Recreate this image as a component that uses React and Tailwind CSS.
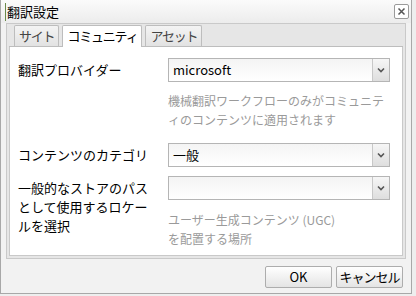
import React from 'react'

const jp = { fontFamily: '"Noto Sans CJK JP", "Noto Sans", sans-serif' }

const Select = ({ value }) => (
  <div className="flex h-[24px] w-[222px] border border-[#b5b5b5] bg-gradient-to-b from-[#f4f4f4] to-white">
    <div className="flex-1 pl-[4px] text-[13px] leading-[22px] text-black" style={jp}>{value}</div>
    <div className="flex w-[17px] items-center justify-center border-l border-[#c8c8c8] bg-gradient-to-b from-[#f6f6f6] to-[#dedede]">
      <svg width="8" height="6" viewBox="0 0 8 6">
        <path d="M1 1.5 L4 4.5 L7 1.5" stroke="#555" strokeWidth="1.6" fill="none" />
      </svg>
    </div>
  </div>
)

const Tab = ({ label, active }) => (
  <div
    className={`whitespace-nowrap px-[4px] text-[13px] leading-[20px] tracking-[-1.2px] border border-[#bdbdbd] border-b-0 rounded-t-[2px] ${
      active ? 'bg-white text-black h-[22px] -mb-px' : 'h-[21px] bg-gradient-to-b from-[#f4f4f4] to-[#e2e2e2] text-[#444]'
    }`}
    style={jp}
  >
    {label}
  </div>
)

const App = () => {
  return (
    <div className="h-[296px] w-[416px] bg-[#eeeeee]" style={jp}>
      <div className="flex h-[294px] w-[412px] flex-col border-l border-r border-b border-[#a8a8a8] bg-[#f2f2f2]">
        {/* title bar */}
        <div className="flex h-[23px] items-center justify-between bg-gradient-to-b from-[#fbfbfb] to-[#ececec] pl-[4px] pr-[2px]">
          <div className="flex items-center">
            <div className="mr-[1px] h-[18px] w-px bg-[#6a8a4a]" />
            <span className="text-[13px] text-black">翻訳設定</span>
          </div>
          <div className="flex h-[15px] w-[15px] items-center justify-center rounded-[2px] border border-[#9a9a9a] bg-white">
            <svg width="9" height="9" viewBox="0 0 9 9">
              <path d="M1.5 1.5 L7.5 7.5 M7.5 1.5 L1.5 7.5" stroke="#555" strokeWidth="1.5" />
            </svg>
          </div>
        </div>
        {/* tab area */}
        <div className="mx-[5px] flex h-[236px] flex-col border border-[#c9c9c9] bg-[#e6e6e6] px-[2px] pt-[1px] pb-[2px]">
          <div className="flex items-end gap-[3px] pl-[5px] border-b border-[#bdbdbd]">
            <Tab label="サイト" />
            <Tab label="コミュニティ" active />
            <Tab label="アセット" />
          </div>
          <div className="flex flex-1 flex-col border border-t-0 border-[#c9c9c9] bg-white pl-[8px] pt-[11px]">
            <div className="flex">
              <div className="w-[150px] pt-[2px] text-[13px] leading-[19px] text-black">翻訳プロバイダー</div>
              <div className="flex flex-col">
                <Select value="microsoft" />
                <div className="mt-[9px] w-[222px] text-[12px] leading-[19px] text-[#9a9a9a]">
                  機械翻訳ワークフローのみがコミュニティのコンテンツに適用されます
                </div>
              </div>
            </div>
            <div className="mt-[14px] flex">
              <div className="w-[150px] pt-[2px] text-[13px] leading-[19px] text-black">コンテンツのカテゴリ</div>
              <Select value="一般" />
            </div>
            <div className="mt-[9px] flex">
              <div className="w-[136px] mr-[14px] text-[13px] leading-[19px] text-black pt-[2px]">
                一般的なストアのパスとして使用するロケールを選択
              </div>
              <div className="flex flex-col">
                <Select value="" />
                <div className="mt-[10px] text-[12px] leading-[19px] text-[#9a9a9a]">
                  ユーザー生成コンテンツ (UGC)
                  <br />
                  を配置する場所
                </div>
              </div>
            </div>
          </div>
        </div>
        {/* footer */}
        <div className="mt-[7px] flex justify-end gap-[4px] pr-[8px]">
          <button className="h-[22px] w-[67px] whitespace-nowrap rounded-[2px] border border-[#adadad] bg-gradient-to-b from-white to-[#e4e4e4] text-[13px] leading-[20px] text-black">
            OK
          </button>
          <button className="h-[22px] w-[67px] whitespace-nowrap rounded-[2px] border border-[#adadad] bg-gradient-to-b from-white to-[#e4e4e4] px-0 text-[13px] leading-[20px] tracking-[-1px] text-black">
            キャンセル
          </button>
        </div>
      </div>
    </div>
  )
}

export default App
